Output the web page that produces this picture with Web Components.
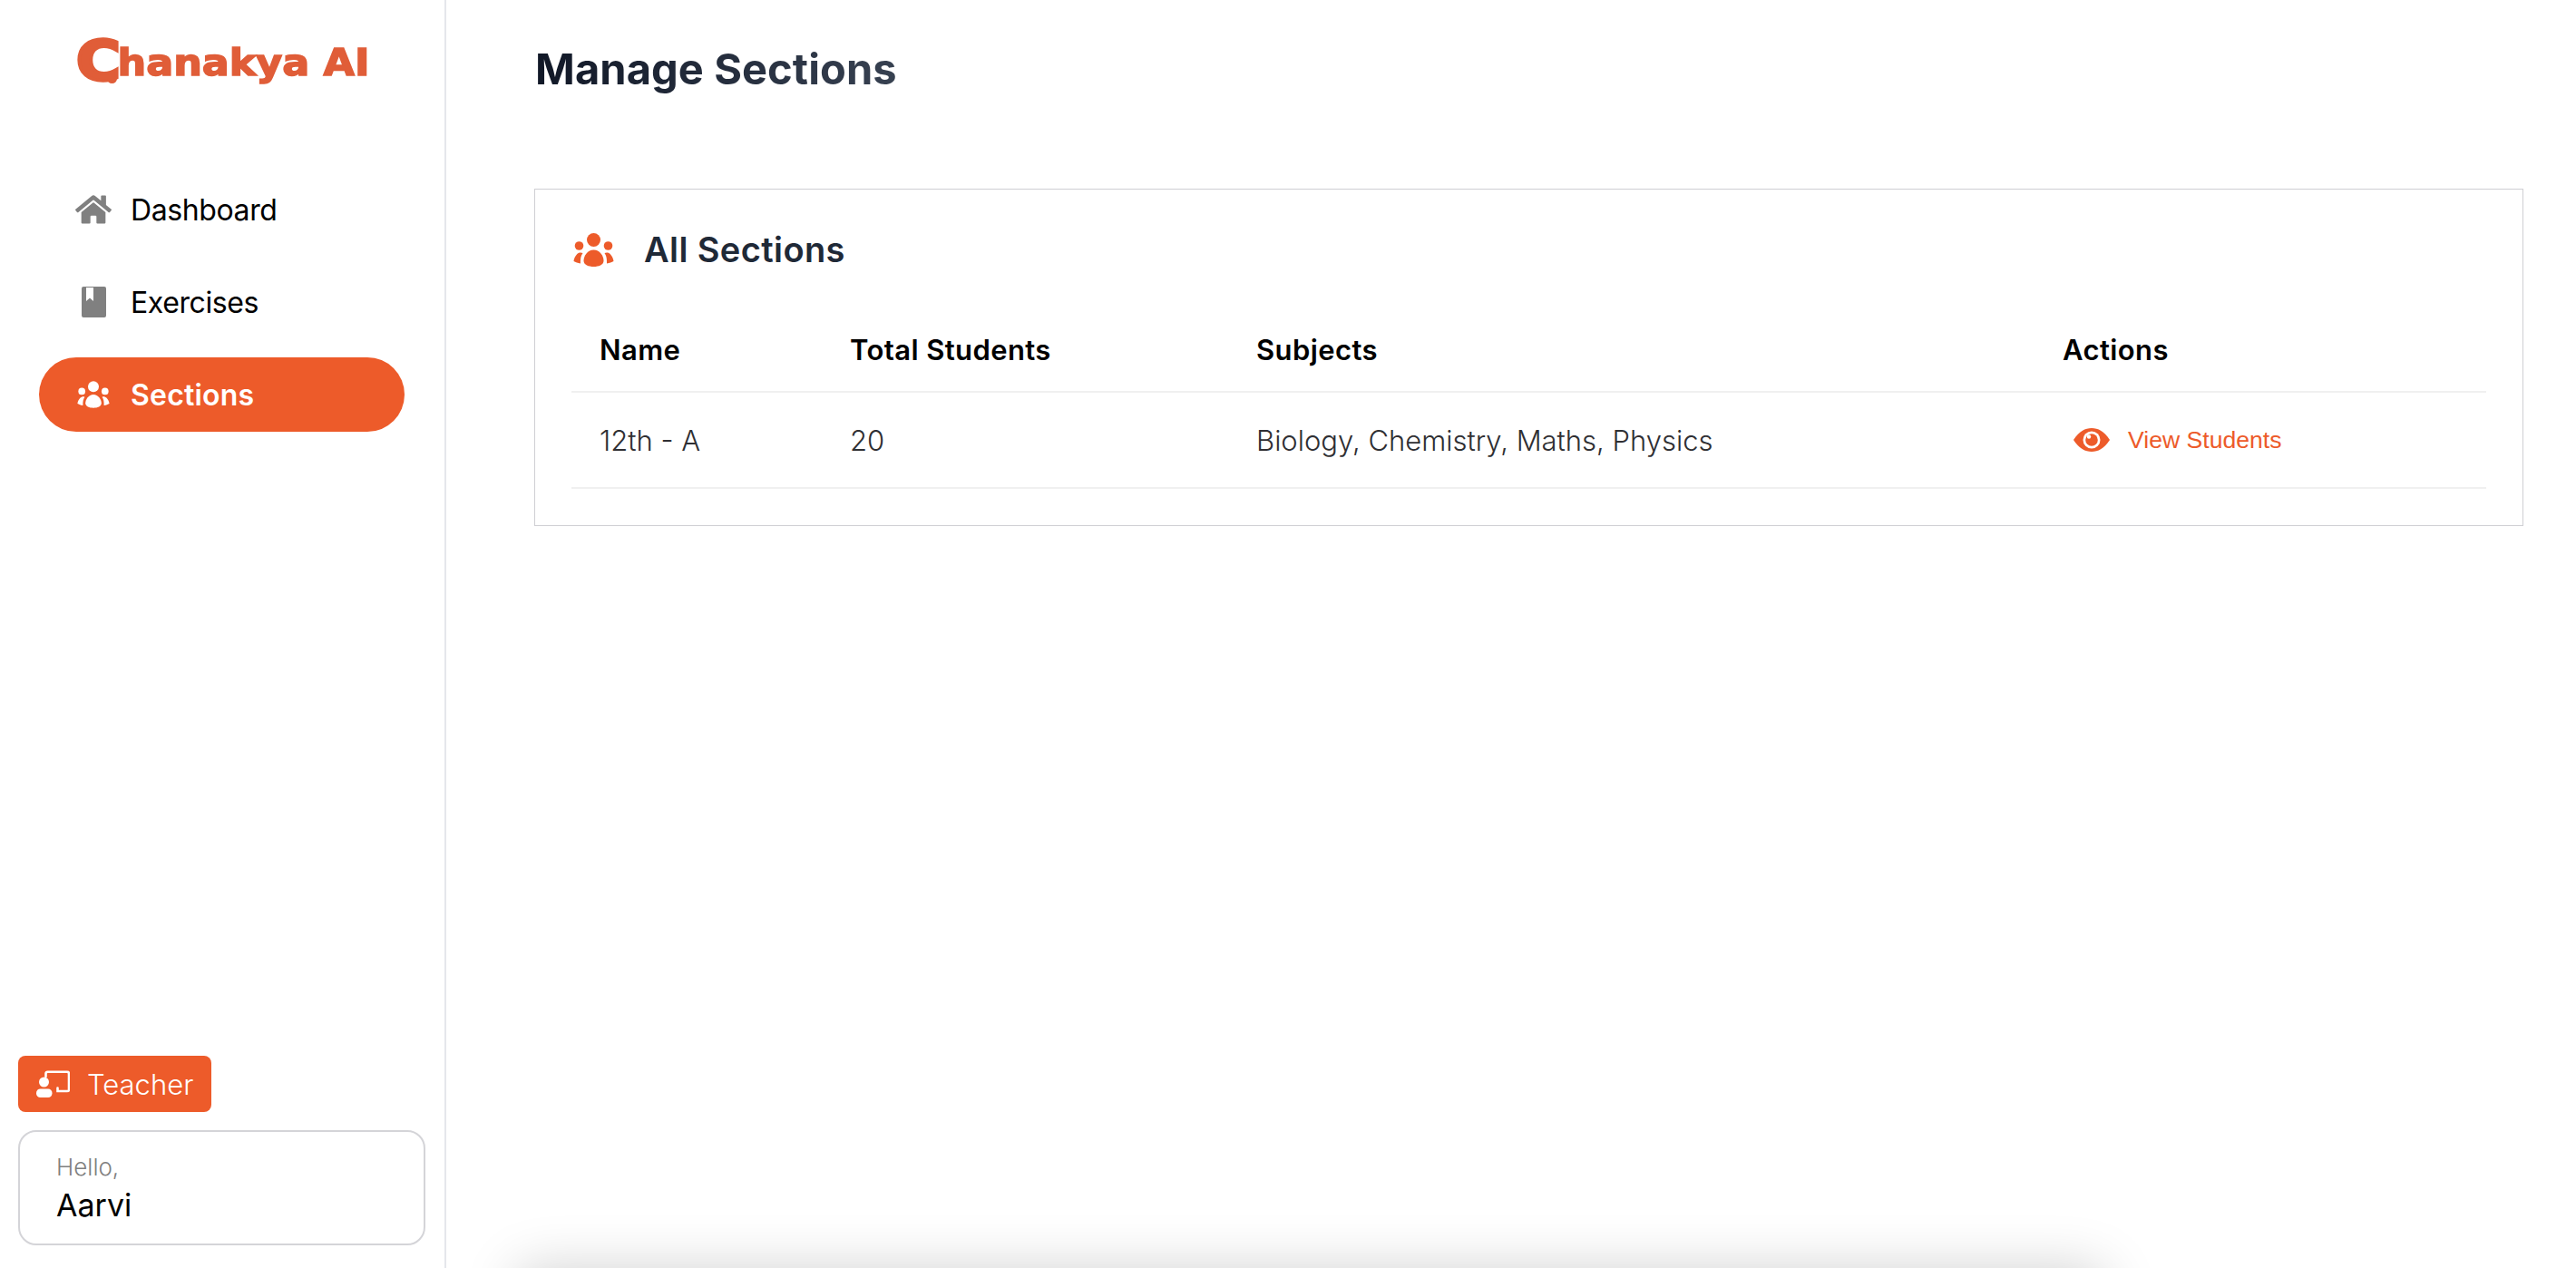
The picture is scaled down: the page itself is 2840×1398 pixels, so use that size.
<!DOCTYPE html>
<html lang="en">
<head>
<meta charset="utf-8">
<title>Manage Sections</title>
<style>
    html, body { margin: 0; height: 100%; overflow: hidden; background: #fff; }
    body { font-family: Inter, "Noto Sans", sans-serif; }
</style>
</head>
<body>
<app-shell>
    <side-bar slot="side">
        <brand-logo slot="logo"></brand-logo>
        <nav-item icon="home">Dashboard</nav-item>
        <nav-item icon="book">Exercises</nav-item>
        <nav-item icon="users" active>Sections</nav-item>
        <role-badge slot="foot">Teacher</role-badge>
        <user-card slot="foot" name="Aarvi"></user-card>
    </side-bar>
    <page-title>Manage Sections</page-title>
    <sections-card></sections-card>
</app-shell>

<script>
const ICONS = {
    home: `<svg viewBox="0 0 576 512" width="40" height="36"><path fill="currentColor" d="M280.37 148.26L96 300.11V464a16 16 0 0 0 16 16l112.06-.29a16 16 0 0 0 15.92-16V368a16 16 0 0 1 16-16h64a16 16 0 0 1 16 16v95.64a16 16 0 0 0 16 16.05L464 480a16 16 0 0 0 16-16V300L295.67 148.26a12.19 12.19 0 0 0-15.3 0zM571.6 251.47L488 182.56V44.05a12 12 0 0 0-12-12h-56a12 12 0 0 0-12 12v72.61L318.47 43a48 48 0 0 0-61 0L4.34 251.47a12 12 0 0 0-1.6 16.9l25.5 31A12 12 0 0 0 45.15 301l235.22-193.74a12.19 12.19 0 0 1 15.3 0L530.9 301a12 12 0 0 0 16.9-1.6l25.5-31a12 12 0 0 0-1.7-16.93z"/></svg>`,
    book: `<svg viewBox="0 0 27 34" width="27" height="34"><path fill="currentColor" fill-rule="evenodd" d="M2 0H25a2 2 0 0 1 2 2V32a2 2 0 0 1-2 2H2a2 2 0 0 1-2-2V2a2 2 0 0 1 2-2zM5 1V16l4-3.500 4 3.500V1z"/></svg>`,
    users: `<svg viewBox="0 0 45 37" width="36" height="30"><g fill="currentColor"><circle cx="22.500" cy="7.500" r="7.500"/><circle cx="6.500" cy="14" r="4.800"/><circle cx="38.500" cy="14" r="4.800"/><path d="M22.500 18.500C29 18.500 33.500 25 33.500 30.500C33.500 35 28 37 22.500 37S11.500 35 11.500 30.500C11.500 25 16 18.500 22.500 18.500z"/><path d="M7 21.500C8 21.300 9.700 21.500 10.500 22C8.500 25 7.800 28 8 33.500C5 33 2.500 32 .5 31C1 27 3.500 22.500 7 21.500z"/><path d="M38 21.500C37 21.300 35.300 21.500 34.500 22C36.500 25 37.200 28 37 33.500C40 33 42.500 32 44.500 31C44 27 41.500 22.500 38 21.500z"/></g></svg>`,
    teacher: `<svg viewBox="0 0 37 30" width="37" height="30"><path fill="none" stroke="currentColor" stroke-width="2.600" stroke-linecap="round" d="M10.500 7V3.500Q10.500 1.800 12.500 1.800H34Q36 1.800 36 3.500V21.500Q36 23 34 23H23.500V19.500"/><circle cx="8.500" cy="13" r="5.500" fill="currentColor"/><rect x="0" y="20.500" width="17.500" height="9.500" rx="4.500" fill="currentColor"/></svg>`,
    eye: `<svg viewBox="0 0 40 26" width="40" height="26"><path fill="currentColor" d="M0 13C6 3.500 13 0 20 0S34 3.500 40 13C34 22.500 27 26 20 26S6 22.500 0 13z"/><circle cx="20" cy="13" r="9.500" fill="#fff"/><circle cx="20" cy="13" r="6.800" fill="currentColor"/><circle cx="17" cy="9.500" r="2.200" fill="#fff"/></svg>`
};

class AppShell extends HTMLElement {
    constructor() {
        super();
        this.attachShadow({ mode: 'open' }).innerHTML = `
        <style>
            :host { display: grid; grid-template-columns: 492px 1fr; height: 1398px; }
            main { padding: 46px 58px 0 97px; min-width: 0; }
            .peek {
                position: fixed; left: 570px; top: 1398px; width: 1750px; height: 100px;
                border-radius: 12px; background: #fff;
                box-shadow: 0 0 60px rgba(0, 0, 0, .18);
            }
        </style>
        <slot name="side"></slot>
        <main><slot></slot></main>
        <div class="peek"></div>`;
    }
}

class SideBar extends HTMLElement {
    constructor() {
        super();
        this.attachShadow({ mode: 'open' }).innerHTML = `
        <style>
            :host {
                display: flex; flex-direction: column; box-sizing: border-box; height: 1398px;
                border-right: 2px solid #e5e7eb; padding: 0 21px 25px 20px;
            }
            .logo { height: 190px; }
            nav { display: flex; flex-direction: column; gap: 20px; padding: 0 23px; }
            .foot { margin-top: auto; display: flex; flex-direction: column; align-items: flex-start; gap: 20px; }
        </style>
        <div class="logo"><slot name="logo"></slot></div>
        <nav><slot></slot></nav>
        <div class="foot"><slot name="foot"></slot></div>`;
    }
}

class BrandLogo extends HTMLElement {
    constructor() {
        super();
        this.attachShadow({ mode: 'open' }).innerHTML = `
        <style>
            :host {
                display: block; position: relative; margin: 0 0 0 64px; padding-top: 41px;
                font: 700 40px/52px "DejaVu Sans", sans-serif; color: #e05d38;
                -webkit-text-stroke: 1.500px #e05d38; white-space: nowrap;
            }
            span { display: inline-block; transform-origin: 0 50%; transform: scaleX(1.110); }
            b { font-size: 60px; line-height: 52px; font-weight: 700; -webkit-text-stroke: 3.500px #e05d38; margin-right: -3px; vertical-align: -5px; }
            i { position: absolute; left: 34px; top: 85px; width: 11px; height: 7px; background: #e05d38; border-radius: 0 0 6px 6px; }
        </style>
        <span><b>C</b>hanakya AI</span><i></i>`;
    }
}

class NavItem extends HTMLElement {
    constructor() {
        super();
        const active = this.hasAttribute('active');
        this.attachShadow({ mode: 'open' }).innerHTML = `
        <style>
            :host {
                display: flex; align-items: center; height: 82px; border-radius: 41px;
                font-size: 32px; font-weight: ${active ? 600 : 400};
                letter-spacing: ${active ? '.2px' : '-.4px'};
                color: ${active ? '#fff' : '#000'};
                background: ${active ? '#ed5b2a' : 'transparent'};
            }
            .ico { width: 40px; margin: 0 21px 0 40px; display: flex; justify-content: center; color: ${active ? '#fff' : '#808080'}; }
            svg { display: block; flex: none; }
        </style>
        <span class="ico">${ICONS[this.getAttribute('icon')]}</span><slot></slot>`;
    }
}

class RoleBadge extends HTMLElement {
    constructor() {
        super();
        this.attachShadow({ mode: 'open' }).innerHTML = `
        <style>
            :host {
                display: flex; align-items: center; gap: 19px; height: 62px; box-sizing: border-box;
                padding: 0 20px; border-radius: 8px; background: #ed5b2a; color: #fff;
                font-size: 31px; font-weight: 300;
            }
            svg { display: block; }
        </style>
        ${ICONS.teacher}<slot></slot>`;
    }
}

class UserCard extends HTMLElement {
    constructor() {
        super();
        this.attachShadow({ mode: 'open' }).innerHTML = `
        <style>
            :host {
                display: flex; flex-direction: column; align-self: stretch; box-sizing: border-box;
                height: 127px; padding: 19px 40px; border: 2px solid #d4d4d8; border-radius: 20px;
            }
            small { font-size: 26px; line-height: 40px; font-weight: 300; color: #808080; }
            strong { font-size: 34px; line-height: 44px; font-weight: 400; color: #000; }
        </style>
        <small>Hello,</small>
        <strong>${this.getAttribute('name')}</strong>`;
    }
}

class PageTitle extends HTMLElement {
    constructor() {
        super();
        this.attachShadow({ mode: 'open' }).innerHTML = `
        <style>
            :host { display: block; height: 60px; margin: 0 0 102px 1px; }
            h1 {
                display: inline-block; margin: 0; font-size: 47px; line-height: 60px; font-weight: 700;
                letter-spacing: .1px;
                background: linear-gradient(to right, #111827, #374151);
                -webkit-background-clip: text; background-clip: text; color: transparent;
            }
        </style>
        <h1><slot></slot></h1>`;
    }
}

class SectionsCard extends HTMLElement {
    constructor() {
        super();
        this.attachShadow({ mode: 'open' }).innerHTML = `
        <style>
            :host {
                display: block; box-sizing: border-box; height: 372px;
                border: 1px solid #cfcfd3; padding: 41px 40px 0 40px;
            }
            header { display: flex; align-items: center; height: 50px; gap: 33px; padding-left: 2px; color: #1f2937; }
            header svg { display: block; color: #ed5b2a; width: 45px; height: 37px; }
            h2 { margin: 0; font-size: 38px; font-weight: 600; line-height: 50px; letter-spacing: .4px; }
            table { width: 100%; margin-top: 40px; border-collapse: collapse; table-layout: fixed; }
            th, td { padding: 0 0 0 31px; text-align: left; border-bottom: 2px solid #f0f0f0; font-size: 31px; }
            th { height: 91px; font-weight: 600; color: #000; letter-spacing: .4px; }
            td { height: 104px; font-weight: 300; color: #2f2f33; }
            .act { display: flex; align-items: center; gap: 20px; padding-left: 12px; color: #ed5b2a; font: 400 26.600px "Liberation Sans", sans-serif; }
            .act svg { display: block; }
        </style>
        <header>${ICONS.users}<h2>All Sections</h2></header>
        <table>
            <colgroup><col style="width:276px"><col style="width:448px"><col style="width:889px"><col></colgroup>
            <thead><tr><th>Name</th><th>Total Students</th><th>Subjects</th><th>Actions</th></tr></thead>
            <tbody><tr>
                <td>12th - A</td>
                <td>20</td>
                <td>Biology, Chemistry, Maths, Physics</td>
                <td><span class="act">${ICONS.eye}View Students</span></td>
            </tr></tbody>
        </table>`;
    }
}

customElements.define('app-shell', AppShell);
customElements.define('side-bar', SideBar);
customElements.define('brand-logo', BrandLogo);
customElements.define('nav-item', NavItem);
customElements.define('role-badge', RoleBadge);
customElements.define('user-card', UserCard);
customElements.define('page-title', PageTitle);
customElements.define('sections-card', SectionsCard);
</script>
</body>
</html>
